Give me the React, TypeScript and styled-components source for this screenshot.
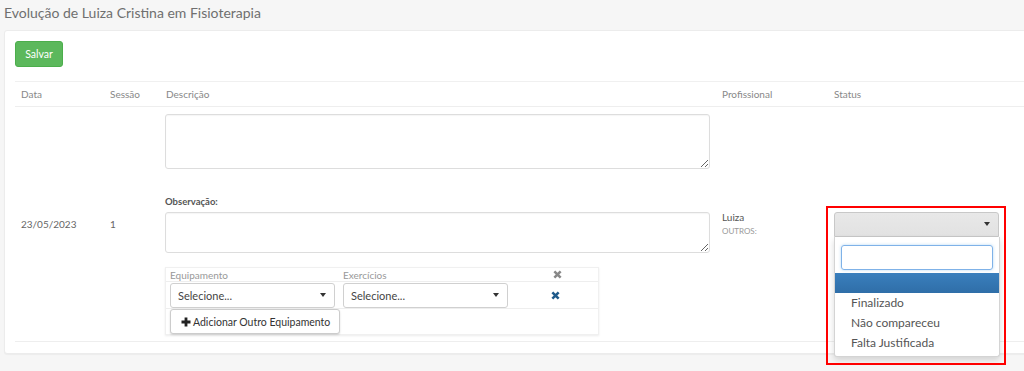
import React from "react";
import styled, { createGlobalStyle } from "styled-components";

const Global = createGlobalStyle`
  html, body { margin: 0; padding: 0; }
  body {
    background: #f6f6f6;
    font-family: Lato, "Open Sans", "Liberation Sans", sans-serif;
    color: #666;
    overflow: hidden;
    width: 1024px;
    height: 371px;
  }
  * { box-sizing: border-box; }
`;

const Title = styled.h1`
  margin: 0;
  font-size: 14px;
  font-weight: 400;
  line-height: 18px;
  color: #6f6f6f;
  padding: 4px 0 8px 4px;
  height: 30px;
`;

const Panel = styled.div`
  margin-left: 4px;
  width: 1040px;
  height: 324px;
  background: #fff;
  border: 1px solid #ececec;
  border-radius: 3px;
  box-shadow: 0 1px 1px rgba(0, 0, 0, 0.04);
  padding: 10px 0 0 10px;
`;

const SaveButton = styled.button`
  display: block;
  height: 26px;
  width: 48px;
  padding: 0;
  font-family: inherit;
  font-size: 10.5px;
  color: #fff;
  background: #5cb85c;
  border: 1px solid #4cae4c;
  border-radius: 3px;
  margin-bottom: 14px;
`;

const Table = styled.div`
  display: grid;
  grid-template-columns: 89px 56px 556px 112px 1fr;
`;

const HeadCell = styled.div`
  height: 26px;
  padding: 0 6px;
  display: flex;
  align-items: center;
  font-size: 10px;
  color: #888;
  border-top: 1px solid #f0f0f0;
  border-bottom: 1px solid #eeeeee;
`;

const Cell = styled.div<{ $top?: boolean }>`
  padding: ${(p) => (p.$top ? "7px 6px 6px 5px" : "0 6px")};
  display: flex;
  flex-direction: column;
  justify-content: ${(p) => (p.$top ? "flex-start" : "center")};
  border-bottom: 1px solid #eeeeee;
  font-size: 10px;
  color: #666;
  position: relative;
`;

const TextArea = styled.textarea<{ $h: number; $mb: number }>`
  display: block;
  width: 545px;
  height: ${(p) => p.$h}px;
  margin: 0 0 ${(p) => p.$mb}px 0;
  border: 1px solid #ddd;
  border-radius: 3px;
  box-shadow: inset 0 1px 1px rgba(0, 0, 0, 0.04);
  resize: vertical;
  font-family: inherit;
`;

const Label = styled.div`
  font-size: 9.5px;
  font-weight: 700;
  color: #555;
  line-height: 16px;
  margin-bottom: 2px;
`;

const SubTable = styled.div`
  width: 434px;
  display: grid;
  grid-template-columns: 173px 173px 1fr;
  border: 1px solid #f0f0f0;
  box-shadow: 0 1px 2px rgba(0, 0, 0, 0.08);
`;

const SubHead = styled.div<{ $center?: boolean }>`
  height: 14px;
  padding-left: 4px;
  display: flex;
  align-items: center;
  justify-content: ${(p) => (p.$center ? "center" : "flex-start")};
  font-size: 10px;
  color: #999;
  border-bottom: 1px solid #eee;
`;

const SubCell = styled.div<{ $center?: boolean }>`
  height: 27px;
  padding: 0 3px 0 4px;
  display: flex;
  align-items: center;
  justify-content: ${(p) => (p.$center ? "center" : "flex-start")};
  border-bottom: 1px solid #eee;
`;

const FullRow = styled.div`
  grid-column: 1 / -1;
  height: 25px;
  padding: 0 0 0 4px;
  display: flex;
  align-items: flex-start;
`;

const Select = styled.div<{ $w: number }>`
  width: ${(p) => p.$w}px;
  height: 25px;
  border: 1px solid #d0d0d0;
  border-radius: 3px;
  background: #fff;
  display: flex;
  align-items: center;
  justify-content: space-between;
  padding: 0 8px 0 7px;
  font-size: 11px;
  color: #444;
`;

const Caret = styled.span`
  width: 0;
  height: 0;
  border-left: 3.5px solid transparent;
  border-right: 3.5px solid transparent;
  border-top: 4px solid #333;
`;

const AddButton = styled.button`
  height: 25px;
  width: 170px;
  padding: 0 0 0 10px;
  display: flex;
  align-items: center;
  gap: 2px;
  white-space: nowrap;
  font-family: inherit;
  font-size: 10.5px;
  color: #333;
  background: #fff;
  border: 1px solid #ccc;
  border-radius: 3px;
  box-shadow: 0 1px 2px rgba(0, 0, 0, 0.15);
`;

const ProName = styled.div`
  font-size: 10px;
  color: #555;
  line-height: 14px;
`;

const ProSub = styled.div`
  font-size: 8px;
  color: #999;
  line-height: 14px;
`;

const StatusWrap = styled.div`
  position: relative;
  width: 165px;
`;

const StatusSelect = styled.div`
  width: 165px;
  height: 25px;
  border: 1px solid #c8c8c8;
  border-radius: 3px 3px 0 0;
  background: linear-gradient(#e8e8e8, #e2e2e2);
  display: flex;
  align-items: center;
  justify-content: flex-end;
  padding-right: 8px;
`;

const Dropdown = styled.div`
  position: absolute;
  left: 0;
  top: 25px;
  width: 166px;
  height: 120px;
  background: #fff;
  border: 1px solid #d4d4d4;
  border-top: none;
  border-radius: 0 0 3px 3px;
  box-shadow: 0 3px 6px rgba(0, 0, 0, 0.15);
  padding-top: 8px;
  z-index: 2;
`;

const Search = styled.div`
  margin: 0 6px 3px 6px;
  height: 25px;
  border: 1px solid #7fb2e8;
  border-radius: 3px;
  box-shadow: 0 0 3px rgba(102, 175, 233, 0.5);
`;

const Option = styled.div<{ $active?: boolean }>`
  height: 20px;
  padding-left: 16px;
  display: flex;
  align-items: center;
  font-size: 12px;
  color: #555;
  background: ${(p) => (p.$active ? "linear-gradient(#3a7fbd, #2f6ea8)" : "transparent")};
`;

const Highlight = styled.div`
  position: absolute;
  left: -8px;
  top: -6px;
  width: 180px;
  height: 159px;
  border: 2px solid #ff0000;
  z-index: 3;
  pointer-events: none;
`;

const Times = ({ color }: { color: string }) => (
  <svg width="9" height="9" viewBox="0 0 10 10">
    <path d="M1.5 1.5 L8.5 8.5 M8.5 1.5 L1.5 8.5" stroke={color} strokeWidth="2.8" />
  </svg>
);

const Plus = () => (
  <svg width="10" height="10" viewBox="0 0 10 10">
    <path d="M5 0.5 V9.5 M0.5 5 H9.5" stroke="#222" strokeWidth="2.8" />
  </svg>
);

export default function App() {
  return (
    <>
      <Global />
      <Title>Evolução de Luiza Cristina em Fisioterapia</Title>
      <Panel>
        <SaveButton>Salvar</SaveButton>
        <Table>
          <HeadCell>Data</HeadCell>
          <HeadCell>Sessão</HeadCell>
          <HeadCell>Descrição</HeadCell>
          <HeadCell>Profissional</HeadCell>
          <HeadCell>Status</HeadCell>

          <Cell>23/05/2023</Cell>
          <Cell>1</Cell>
          <Cell $top>
            <TextArea $h={55} $mb={25} />
            <Label>Observação:</Label>
            <TextArea $h={41} $mb={14} />
            <SubTable>
              <SubHead>Equipamento</SubHead>
              <SubHead>Exercícios</SubHead>
              <SubHead $center>
                <Times color="#888" />
              </SubHead>
              <SubCell>
                <Select $w={165}>
                  Selecione...
                  <Caret />
                </Select>
              </SubCell>
              <SubCell>
                <Select $w={165}>
                  Selecione...
                  <Caret />
                </Select>
              </SubCell>
              <SubCell $center>
                <Times color="#1f5a8a" />
              </SubCell>
              <FullRow>
                <AddButton>
                  <Plus />
                  Adicionar Outro Equipamento
                </AddButton>
              </FullRow>
            </SubTable>
          </Cell>
          <Cell>
            <ProName>Luiza</ProName>
            <ProSub>OUTROS:</ProSub>
          </Cell>
          <Cell>
            <StatusWrap>
              <StatusSelect>
                <Caret />
              </StatusSelect>
              <Dropdown>
                <Search />
                <Option $active />
                <Option>Finalizado</Option>
                <Option>Não compareceu</Option>
                <Option>Falta Justificada</Option>
              </Dropdown>
              <Highlight />
            </StatusWrap>
          </Cell>
        </Table>
      </Panel>
    </>
  );
}
